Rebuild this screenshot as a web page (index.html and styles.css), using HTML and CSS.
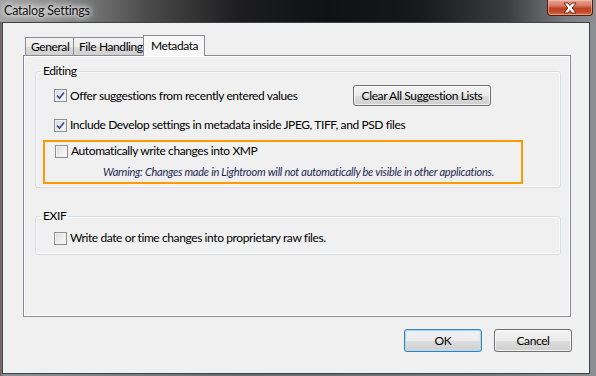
FILE: index.html
```html
<!DOCTYPE html>
<html>
<head>
<meta charset="utf-8">
<link rel="stylesheet" href="styles.css">
</head>
<body>
<div class="window">
  <div class="titlebar">
    <span class="title">Catalog Settings</span>
    <div class="close">
      <svg width="16" height="12" viewBox="0 0 16 12"><path d="M2 1 H6 L8 3.5 L10 1 H14 L10.2 6 L14 11 H10 L8 8.5 L6 11 H2 L5.8 6 Z" fill="#fff" stroke="#5a1d10" stroke-width="0.9" stroke-linejoin="round"/></svg>
    </div>
  </div>
  <div class="frame-body">
    <div class="client">
      <div class="tabs">
        <div class="tab tab-general">General</div>
        <div class="tab tab-file">File Handling</div>
        <div class="tab tab-active">Metadata</div>
      </div>
      <div class="panel">
        <fieldset class="group group-editing">
          <legend>Editing</legend>
          <div class="row row-first">
            <label class="check"><span class="box checked"><svg width="9" height="9" viewBox="0 0 9 9"><path d="M1 4.5 L3.5 7.2 L8 1.5" fill="none" stroke="#3d4f86" stroke-width="1.7"/></svg></span>Offer suggestions from recently entered values</label>
            <button class="btn btn-clear">Clear All Suggestion Lists</button>
          </div>
          <div class="row row-second">
            <label class="check"><span class="box checked"><svg width="9" height="9" viewBox="0 0 9 9"><path d="M1 4.5 L3.5 7.2 L8 1.5" fill="none" stroke="#3d4f86" stroke-width="1.7"/></svg></span>Include Develop settings in metadata inside JPEG, TIFF, and PSD files</label>
          </div>
          <div class="highlight">
            <label class="check check-xmp"><span class="box"></span>Automatically write changes into XMP</label>
            <div class="warning">Warning: Changes made in Lightroom will not automatically be visible in other applications.</div>
          </div>
        </fieldset>
        <fieldset class="group group-exif">
          <legend>EXIF</legend>
          <div class="row row-exif">
            <label class="check"><span class="box"></span>Write date or time changes into proprietary raw files.</label>
          </div>
        </fieldset>
      </div>
      <div class="buttons">
        <button class="btn btn-dialog btn-default">OK</button>
        <button class="btn btn-dialog">Cancel</button>
      </div>
    </div>
  </div>
</div>
</body>
</html>
```
FILE: styles.css
```css
html, body {
  margin: 0;
  padding: 0;
}
body {
  width: 596px;
  height: 376px;
  overflow: hidden;
  font-family: Lato, "Liberation Sans", sans-serif;
  font-size: 12px;
  letter-spacing: -0.4px;
  color: #000;
  background: #3c3f44;
}
.window {
  width: 596px;
  height: 376px;
  display: flex;
  flex-direction: column;
  background: linear-gradient(to right, #6d5a58 0px, #8d9094 3px, #6a6d72 40%, #74777c 80%, #8c8f94 100%);
}
.titlebar {
  height: 22px;
  display: flex;
  justify-content: space-between;
  align-items: flex-start;
  background: linear-gradient(to right, #a3a3a3 0%, #8a8a8a 10%, #4a4a4a 25%, #1d1d1f 40%, #101114 55%, #16181b 70%, #3a3c40 85%, #7a7c80 95%, #8d8f92 100%);
}
.title {
  margin: 4px 0 0 4px;
  font-size: 12.5px;
  letter-spacing: -0.2px;
  line-height: 14px;
  color: #111;
  text-shadow: 0 0 5px #fff, 0 0 8px #fff, 0 0 10px rgba(255,255,255,0.8);
}
.close {
  width: 44px;
  height: 15px;
  margin-right: 3px;
  border: 1px solid #4a1f16;
  border-top: none;
  border-radius: 0 0 4px 4px;
  background: linear-gradient(to bottom, #e7a898 0%, #d7755f 40%, #c0421f 55%, #c24a2a 80%, #d97b4e 100%);
  box-shadow: inset 0 0 0 1px rgba(255,210,200,0.45);
  display: flex;
  justify-content: center;
  align-items: center;
}
.close svg {
  display: block;
}
.frame-body {
  flex: 1;
  padding: 0 6px 2px 2px;
  display: flex;
}
.client {
  flex: 1;
  border: 1px solid #3e4146;
  background: #f0f0f0;
  padding: 12px 18px 0 20px;
  display: flex;
  flex-direction: column;
}
.tabs {
  height: 20px;
  display: flex;
  align-items: flex-end;
  padding-left: 2px;
}
.tab {
  height: 18px;
  box-sizing: border-box;
  border: 1px solid #898c95;
  border-bottom: none;
  background: linear-gradient(to bottom, #f3f3f3 0%, #ebebeb 50%, #dddddd 51%, #cfcfcf 100%);
  padding: 2px 0 0 5px;
  line-height: 14px;
  color: #000;
  white-space: nowrap;
}
.tab-general {
  width: 49px;
}
.tab-file {
  width: 71px;
  margin-left: -1px;
}
.tab-active {
  width: 62px;
  height: 21px;
  margin-left: -1px;
  margin-bottom: -1px;
  padding: 3px 0 0 7px;
  background: #f7f7f7;
  position: relative;
  z-index: 1;
}
.panel {
  width: 548px;
  height: 262px;
  box-sizing: border-box;
  border: 1px solid #898c95;
  box-shadow: inset 0 0 0 1px #fff;
  background: #f0f0f0;
  padding: 8px 9px 0 11px;
}
.group {
  margin: 0;
  padding: 0;
  border: 1px solid #d5dfe5;
  border-radius: 3px;
  box-shadow: inset 0 0 0 1px #fafafa;
  min-width: 0;
}
.group legend {
  margin-left: 5px;
  padding: 0 2px;
  line-height: 14px;
  font-size: 12px;
}
.group-editing {
  padding-bottom: 3px;
}
.group-exif {
  margin-top: 21px;
  padding-bottom: 8px;
}
.row {
  display: flex;
  align-items: center;
  padding-left: 18px;
}
.row-first {
  height: 21px;
  margin-top: 7px;
}
.row-second {
  height: 20px;
  margin-top: 9px;
}
.row-exif {
  height: 16px;
  margin-top: 7px;
}
.check {
  display: flex;
  align-items: center;
  line-height: 16px;
  white-space: nowrap;
}
.box {
  width: 13px;
  height: 13px;
  box-sizing: border-box;
  border: 1px solid #8e8f8f;
  background: linear-gradient(135deg, #d8d8d8 0%, #ececec 50%, #fbfbfb 100%);
  box-shadow: inset 0 0 0 1px #f2f2f2;
  margin-right: 3px;
  display: flex;
  justify-content: center;
  align-items: center;
  flex: none;
}
.box.checked {
  background: linear-gradient(135deg, #cdd5e2 0%, #e6ebf2 50%, #f8f9fb 100%);
}
.box svg {
  display: block;
}
.btn {
  font-family: inherit;
  font-size: 12px;
  letter-spacing: -0.4px;
  color: #000;
  border: 1px solid #707070;
  border-radius: 3px;
  background: linear-gradient(to bottom, #f2f2f2 0%, #ebebeb 50%, #dddddd 51%, #cfcfcf 100%);
  box-shadow: inset 0 0 0 1px rgba(255,255,255,0.7);
  padding: 0;
  margin: 0;
  line-height: 17px;
  white-space: nowrap;
}
.btn-clear {
  width: 138px;
  height: 21px;
  margin-left: auto;
  margin-right: 69px;
}
.highlight {
  margin: 5px 37px 0 7px;
  border: 2px solid #fb9d00;
  padding: 1px 0 3px 10px;
}
.check-xmp {
  height: 16px;
}
.warning {
  margin-top: 6px;
  padding-left: 48px;
  font-style: italic;
  font-size: 11px;
  letter-spacing: -0.25px;
  line-height: 14px;
  color: #1c2650;
  white-space: nowrap;
}
.buttons {
  margin-top: 12px;
  margin-right: -1px;
  display: flex;
  justify-content: flex-end;
  gap: 12px;
}
.btn-dialog {
  width: 78px;
  height: 23px;
}
.btn-default {
  border-color: #3c7fb1;
  box-shadow: inset 0 0 0 1px #a8dcf8, inset 0 0 2px 1px #c6ecfc;
}
```
